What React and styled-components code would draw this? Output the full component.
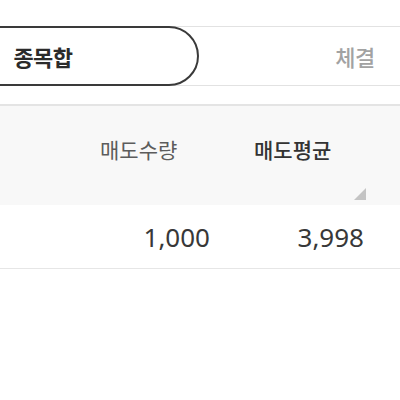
import React from 'react';
import styled, { createGlobalStyle } from 'styled-components';

const GlobalStyle = createGlobalStyle`
  html, body {
    margin: 0;
    padding: 0;
    background: #fff;
    overflow: hidden;
  }
  body {
    font-family: "Noto Sans CJK KR", "Noto Sans", sans-serif;
  }
`;

const Page = styled.div`
  width: 400px;
  height: 400px;
  overflow: hidden;
  padding-top: 26px;
  box-sizing: border-box;
`;

// the tab strip is scrolled so the first tab starts off screen
const TabBar = styled.div`
  display: flex;
  margin-left: -113px;
  height: 60px;
  border-top: 1px solid #e2e2e2;
  border-bottom: 1px solid #e2e2e2;
  box-sizing: border-box;
`;

const Tab = styled.div`
  flex: 0 0 312px;
  display: flex;
  align-items: center;
  justify-content: center;
  box-sizing: border-box;
  margin: -1px 0;
  height: 60px;
  font-size: 22px;
  font-weight: ${({ active }) => (active ? 700 : 500)};
  color: ${({ active }) => (active ? '#2b2b2b' : '#a2a2a2')};
  border: ${({ active }) => (active ? '2px solid #3a3a3a' : '2px solid transparent')};
  border-radius: 30px;
  letter-spacing: -0.5px;
`;

const Table = styled.div`
  margin-top: 18px;
  border-top: 2px solid #e4e4e4;
`;

const Row = styled.div`
  display: grid;
  grid-template-columns: 1fr 154px 154px 21px;
  height: ${({ head }) => (head ? '99px' : '63px')};
  background: ${({ head }) => (head ? '#f8f8f8' : '#fff')};
  border-bottom: ${({ head }) => (head ? 'none' : '1px solid #e6e6e6')};
`;

const HeadCell = styled.div`
  position: relative;
  padding: 28px 0 0 29px;
  font-size: 21px;
  font-weight: ${({ strong }) => (strong ? 500 : 400)};
  color: ${({ strong }) => (strong ? '#333' : '#5c5c5c')};
`;

const SortMark = styled.span`
  position: absolute;
  right: 13px;
  bottom: 5px;
  width: 0;
  height: 0;
  border-left: 12px solid transparent;
  border-bottom: 12px solid #c4c4c4;
`;

const Cell = styled.div`
  display: flex;
  align-items: center;
  justify-content: flex-end;
  padding-right: 15px;
  font-family: "Noto Sans", sans-serif;
  font-size: 26px;
  color: #383838;
`;

const App = () => (
  <Page>
    <GlobalStyle />
    <TabBar>
      <Tab active>종목합</Tab>
      <Tab>체결</Tab>
    </TabBar>
    <Table>
      <Row head>
        <div />
        <HeadCell>매도수량</HeadCell>
        <HeadCell strong>
          매도평균
          <SortMark />
        </HeadCell>
        <div />
      </Row>
      <Row>
        <div />
        <Cell>1,000</Cell>
        <Cell>3,998</Cell>
        <div />
      </Row>
    </Table>
  </Page>
);

export default App;
